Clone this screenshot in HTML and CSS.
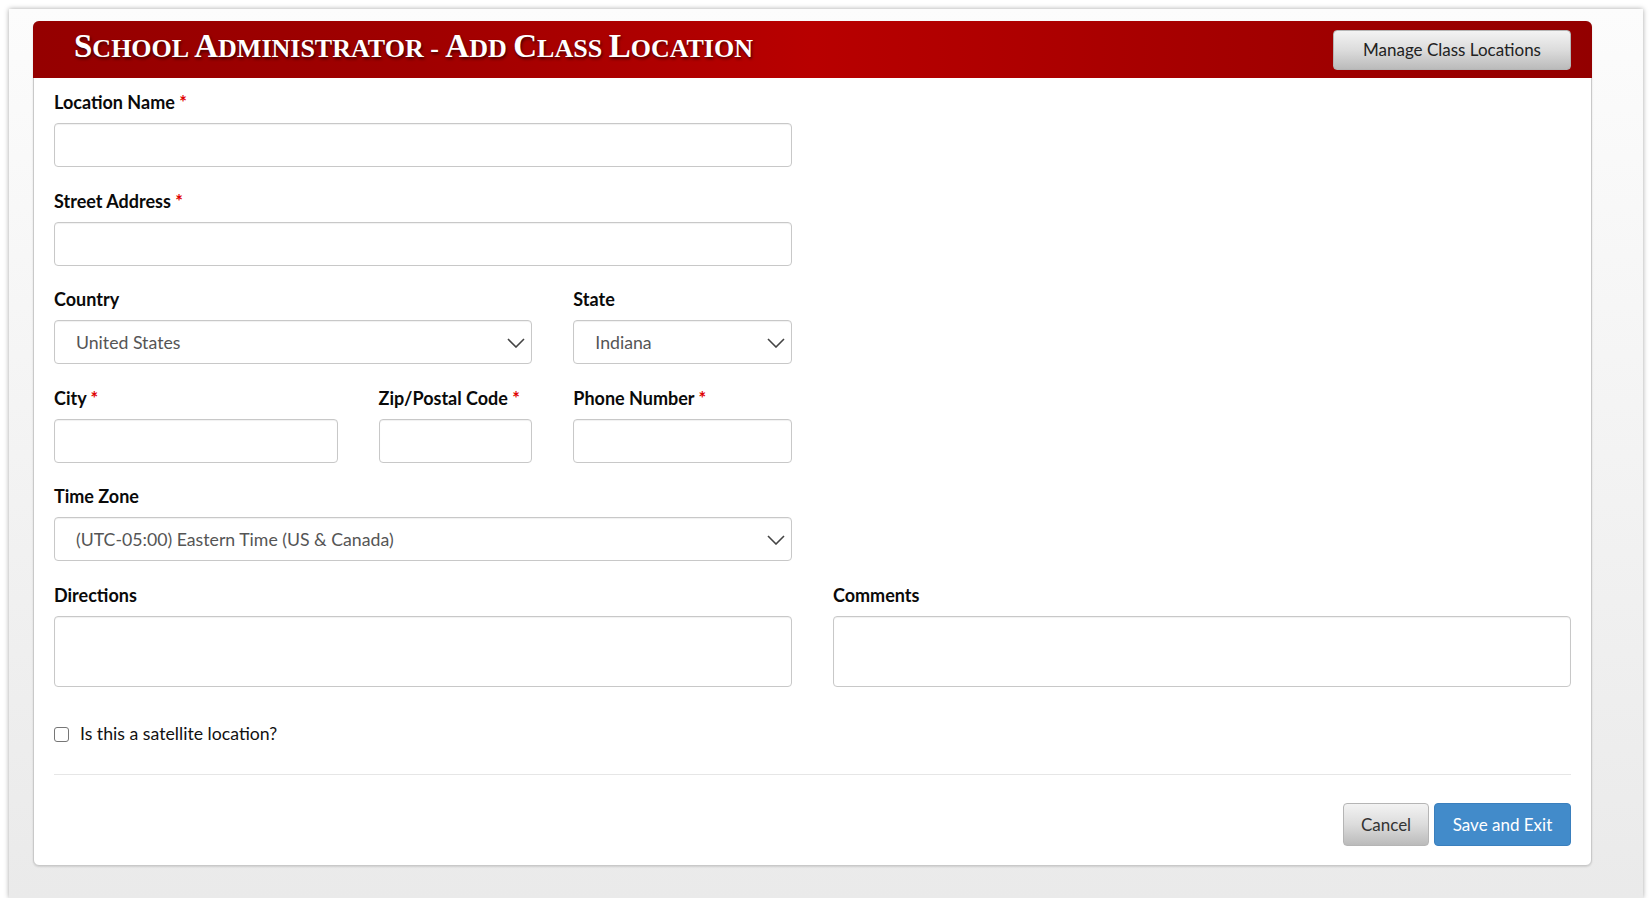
FILE: index.html
```html
<!DOCTYPE html>
<html lang="en">
<head>
<meta charset="utf-8">
<title>School Administrator - Add Class Location</title>
<link rel="stylesheet" href="styles.css">
</head>
<body>
<div class="frame">
  <div class="card">
    <div class="card-header">
      <h1 class="title"><span class="cap">S</span>chool <span class="cap">A</span>dministrator - <span class="cap">A</span>dd <span class="cap">C</span>lass <span class="cap">L</span>ocation</h1>
      <button class="btn btn-light btn-manage" type="button">Manage Class Locations</button>
    </div>
    <form class="card-body">
      <div class="form-grid">
        <div class="field span-12 row-start">
          <label class="label">Location Name <span class="req">*</span></label>
          <input class="control" type="text">
        </div>
        <div class="field span-12 row-start">
          <label class="label">Street Address <span class="req">*</span></label>
          <input class="control" type="text">
        </div>
        <div class="field span-8 row-start">
          <label class="label">Country</label>
          <div class="select-wrap">
            <select class="control select"><option>United States</option></select>
            <svg class="chevron" viewBox="0 0 18 10" width="18" height="10"><path d="M1 1l8 8 8-8" fill="none" stroke="#444" stroke-width="1.6"/></svg>
          </div>
        </div>
        <div class="field span-4">
          <label class="label">State</label>
          <div class="select-wrap">
            <select class="control select"><option>Indiana</option></select>
            <svg class="chevron" viewBox="0 0 18 10" width="18" height="10"><path d="M1 1l8 8 8-8" fill="none" stroke="#444" stroke-width="1.6"/></svg>
          </div>
        </div>
        <div class="field span-5 row-start">
          <label class="label">City <span class="req">*</span></label>
          <input class="control" type="text">
        </div>
        <div class="field span-3">
          <label class="label">Zip/Postal Code <span class="req">*</span></label>
          <input class="control" type="text">
        </div>
        <div class="field span-4">
          <label class="label">Phone Number <span class="req">*</span></label>
          <input class="control" type="text">
        </div>
        <div class="field span-12 row-start">
          <label class="label">Time Zone</label>
          <div class="select-wrap">
            <select class="control select"><option>(UTC-05:00) Eastern Time (US &amp; Canada)</option></select>
            <svg class="chevron" viewBox="0 0 18 10" width="18" height="10"><path d="M1 1l8 8 8-8" fill="none" stroke="#444" stroke-width="1.6"/></svg>
          </div>
        </div>
        <div class="field span-12 row-start">
          <label class="label">Directions</label>
          <textarea class="control textarea"></textarea>
        </div>
        <div class="field span-12">
          <label class="label">Comments</label>
          <textarea class="control textarea"></textarea>
        </div>
      </div>
      <label class="check">
        <input class="checkbox" type="checkbox">
        <span>Is this a satellite location?</span>
      </label>
      <hr class="divider">
      <div class="actions">
        <button class="btn btn-light btn-cancel" type="button">Cancel</button>
        <button class="btn btn-primary" type="button">Save and Exit</button>
      </div>
    </form>
  </div>
</div>
</body>
</html>
```
FILE: styles.css
```css
* { box-sizing: border-box; }

html, body {
  margin: 0;
  padding: 0;
  background: #ffffff;
}

body {
  font-family: "Lato", "Source Sans Pro", "Liberation Sans", sans-serif;
  font-size: 17px;
  color: #111;
}

.frame {
  width: 1634px;
  height: 889px;
  margin: 9px 0 0 9px;
  padding: 12px 0 0 24px;
  background: linear-gradient(to bottom, #fcfcfc 0%, #f3f3f3 50%, #eaeaea 100%);
  box-shadow: 0 0 5px rgba(0, 0, 0, 0.35);
}

.card {
  width: 1559px;
  height: 845px;
  background: #fff;
  border: 1px solid #c9c9c9;
  border-radius: 6px;
  box-shadow: 0 1px 2px rgba(0, 0, 0, 0.12);
  display: flex;
  flex-direction: column;
}

.card-header {
  flex: 0 0 57px;
  height: 57px;
  margin: -1px -1px 0 -1px;
  border-radius: 6px 6px 0 0;
  background: linear-gradient(to right, #950000 0%, #a00000 25%, #b80000 50%, #a50000 75%, #930000 100%);
  display: flex;
  align-items: center;
  justify-content: space-between;
  padding: 0 21px 0 41px;
}

.title {
  margin: -4px 0 0 0;
  font-family: "Liberation Serif", "DejaVu Serif", serif;
  font-weight: bold;
  text-transform: uppercase;
  font-size: 26px;
  line-height: 40px;
  color: #fff;
  letter-spacing: 0;
  text-shadow: 1px 2px 3px rgba(0, 0, 0, 0.6);
  white-space: nowrap;
}

.cap {
  font-size: 33px;
}

.btn {
  font-family: inherit;
  font-size: 17px;
  border-radius: 4px;
  cursor: pointer;
  line-height: 24px;
}

.btn-light {
  color: #222;
  border: 1px solid #b5b5b5;
  background: linear-gradient(to bottom, #f3f3f3 0%, #dcdcdc 50%, #bbbbbb 100%);
}

.btn-manage {
  width: 238px;
  height: 40px;
  margin-top: 0;
  padding: 0;
}

.card-body {
  flex: 1;
  padding: 12px 20px 21px 20px;
  display: flex;
  flex-direction: column;
}

.form-grid {
  display: grid;
  grid-template-columns: repeat(24, minmax(0, 1fr));
  column-gap: 41px;
}

.span-12 { grid-column-end: span 12; }
.span-8 { grid-column-end: span 8; }
.span-5 { grid-column-end: span 5; }
.span-4 { grid-column-end: span 4; }
.span-3 { grid-column-end: span 3; }
.row-start { grid-column-start: 1; }

.field {
  margin-bottom: 21.5px;
  min-width: 0;
}

.label {
  display: block;
  font-weight: bold;
  font-size: 18px;
  line-height: 24px;
  margin-bottom: 9px;
  color: #0a0a0a;
  white-space: nowrap;
}

.req {
  color: #e00000;
}

.control {
  display: block;
  width: 100%;
  height: 44px;
  border: 1px solid #c8c8c8;
  border-radius: 4px;
  background: #fff;
  box-shadow: inset 0 1px 1px rgba(0, 0, 0, 0.06);
  font-family: inherit;
  font-size: 17.7px;
  color: #555;
  padding: 0 21px;
  outline: none;
}

.select-wrap {
  position: relative;
}

.select {
  appearance: none;
  -webkit-appearance: none;
  padding-right: 44px;
}

.chevron {
  position: absolute;
  right: 7px;
  top: 18px;
  pointer-events: none;
}

.textarea {
  height: 71px;
  resize: none;
  padding: 8px 21px;
}

.check {
  display: flex;
  align-items: center;
  gap: 11px;
  margin-top: 14px;
  line-height: 24px;
  font-size: 17.7px;
  color: #111;
}

.checkbox {
  appearance: none;
  -webkit-appearance: none;
  width: 15px;
  height: 15px;
  margin: 0;
  border: 1.5px solid #767676;
  border-radius: 3px;
  background: #fff;
}

.divider {
  border: 0;
  border-top: 1px solid #e6e6e6;
  margin: 28px 0 28px 0;
  height: 0;
}

.actions {
  display: flex;
  justify-content: flex-end;
  gap: 5px;
}

.btn-cancel {
  width: 86px;
  height: 43px;
  padding: 0;
  color: #333;
}

.btn-primary {
  width: 137px;
  height: 43px;
  padding: 0;
  color: #fff;
  border: 1px solid #3a7fbd;
  background: #428bca;
}
```
